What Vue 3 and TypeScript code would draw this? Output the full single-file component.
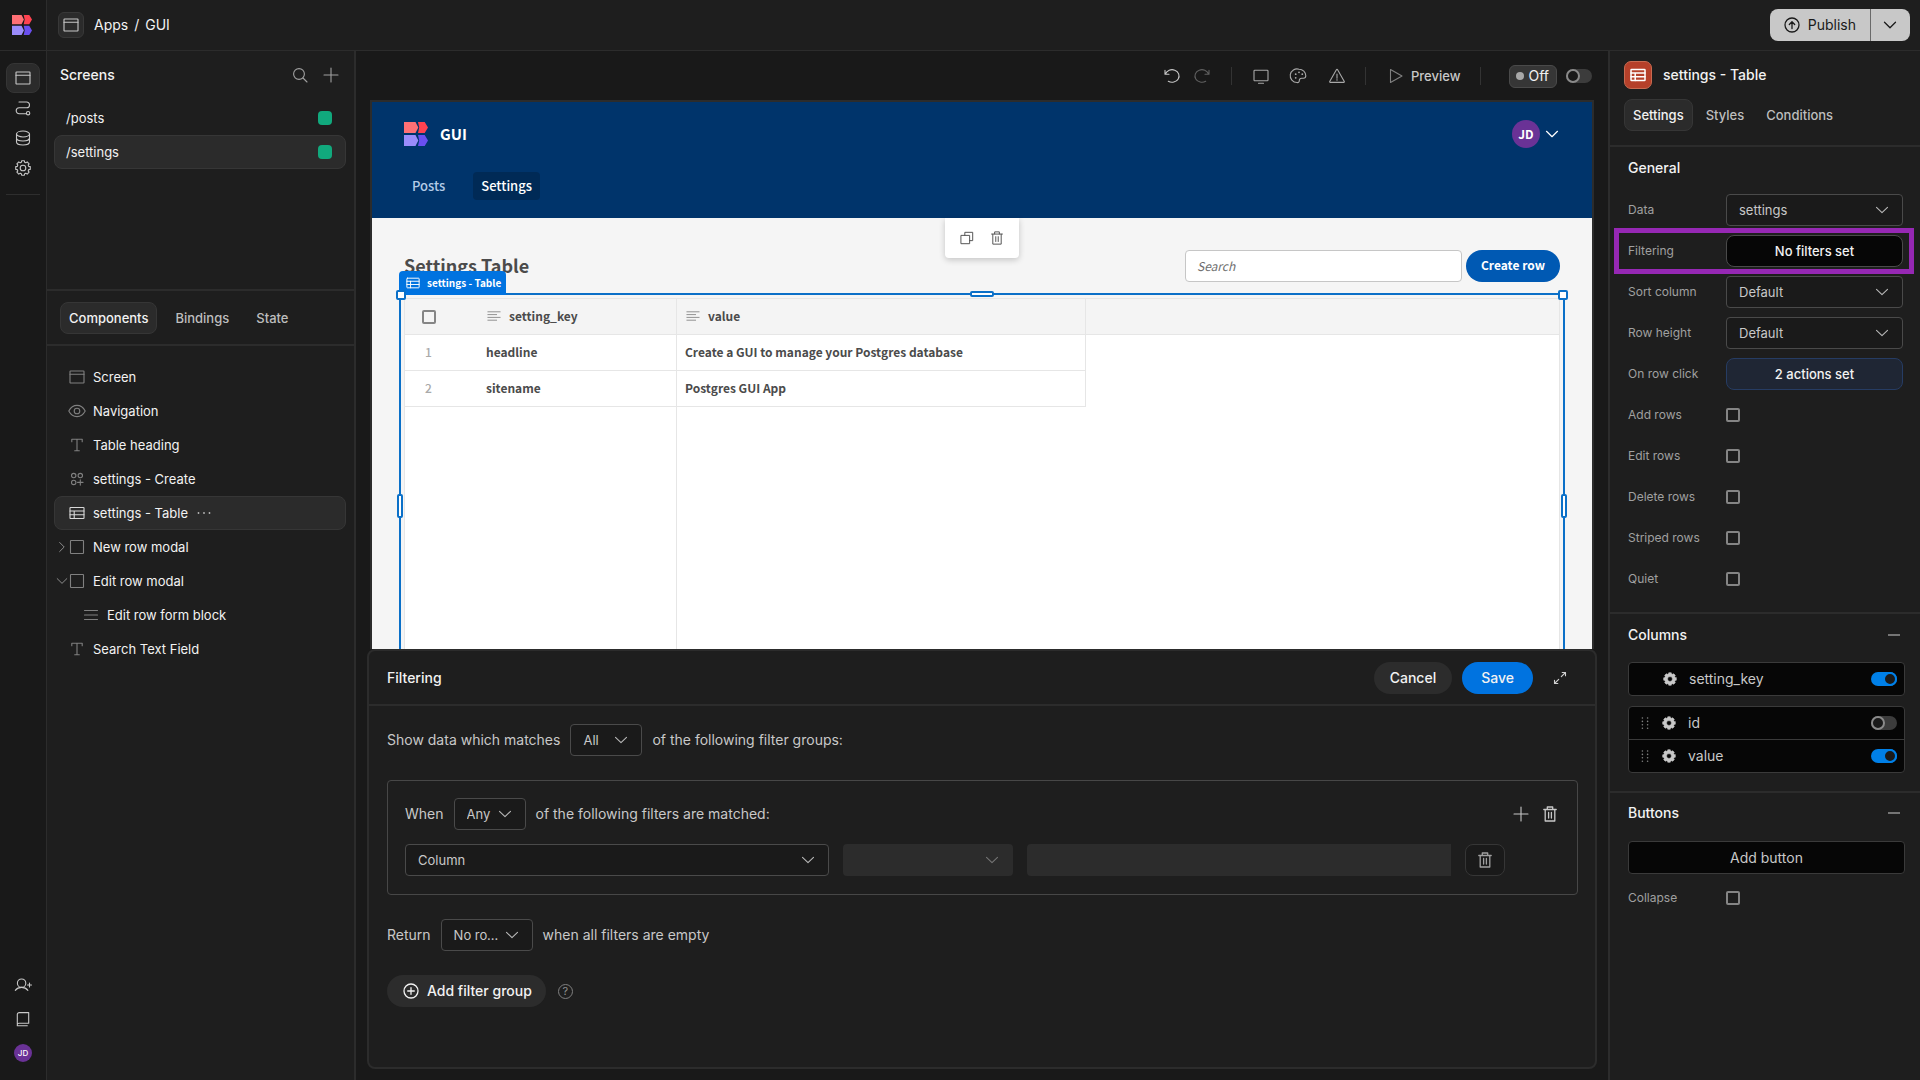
<script setup lang="ts">
import { h, ref } from 'vue'

function gear(outer: number, inner: number, teeth: number): string {
  const step = (Math.PI * 2) / teeth
  const points: string[] = []
  for (let i = 0; i < teeth; i++) {
    const a = i * step
    const corners: [number, number][] = [
      [outer, -0.24], [outer, 0.24], [inner, 0.36], [inner, 0.64],
    ]
    for (const [r, k] of corners) {
      points.push(`${(8 + r * Math.cos(a + k * step)).toFixed(2)} ${(8 + r * Math.sin(a + k * step)).toFixed(2)}`)
    }
  }
  return `M${points.join('L')}Z`
}

const icons: Record<string, string> = {
  window: '<rect x="1" y="2" width="14" height="12" rx=".6"/><path d="M1 5.2h14"/>',
  path: '<path d="M4 2h7.6a2.9 2.9 0 0 1 0 5.8H4.2a3 3 0 0 0 0 6h7"/><circle cx="13.1" cy="13.2" r="1.7"/>',
  database: '<ellipse cx="8" cy="4" rx="6.5" ry="3"/><path d="M1.500 4v8c0 1.700 2.900 3 6.500 3s6.500-1.300 6.500-3V4M1.500 8c0 1.700 2.900 3 6.500 3s6.500-1.300 6.500-3"/>',
  gear: `<path d="${gear(7.4, 5.9, 8)}"/><circle cx="8" cy="8" r="2.8"/>`,
  gearFill: `<path fill="currentColor" fill-rule="evenodd" stroke="currentColor" stroke-width=".6" d="${gear(7.4, 6.2, 8)}M8 5.200a2.800 2.800 0 1 0 0 5.600a2.800 2.800 0 1 0 0-5.600Z"/>`,
  search: '<circle cx="7" cy="7" r="5.4"/><path d="M11 11l4 4"/>',
  plus: '<path d="M8 1v14M1 8h14"/>',
  eye: '<path d="M-.2 8C1.800 4.200 4.700 2.400 8 2.400s6.200 1.800 8.200 5.600c-2 3.800-4.900 5.600-8.200 5.600S1.800 11.800-.2 8Z"/><circle cx="8" cy="8" r="2.800"/>',
  text: '<path d="M2.800 4.800V2.200h10.400v2.600M8 2.200v11.500M5.700 13.700h4.600"/>',
  shapes: '<circle cx="4.700" cy="4.600" r="2.200"/><circle cx="11.300" cy="4.600" r="2.200"/><circle cx="4.700" cy="11.400" r="2.200"/><path d="M11.300 8.700v5.400M8.600 11.400H14"/>',
  table: '<rect x="1" y="2.500" width="14" height="11" rx=".6"/><path d="M1 6h14M1 9.700h14M5.200 6v7.500"/>',
  square: '<rect x="1.500" y="1.500" width="13" height="13" rx=".6"/>',
  lines: '<path d="M1.500 3.500h13M1.500 8h13M1.500 12.500h13"/>',
  align: '<path d="M1 3.200h14M1 6.400h10M1 9.600h14M1 12.800h10"/>',
  chevron: '<path d="M2.500 5.300L8 10.700l5.500-5.400"/>',
  chevronRight: '<path d="M5.300 2.800L10.500 8l-5.200 5.200"/>',
  dots: '<g fill="currentColor" stroke="none"><circle cx="2.500" cy="8" r=".9"/><circle cx="8" cy="8" r=".9"/><circle cx="13.500" cy="8" r=".9"/></g>',
  grip: '<g fill="currentColor" stroke="none"><circle cx="5.400" cy="3" r=".8"/><circle cx="10.600" cy="3" r=".8"/><circle cx="5.400" cy="6.400" r=".8"/><circle cx="10.600" cy="6.400" r=".8"/><circle cx="5.400" cy="9.800" r=".8"/><circle cx="10.600" cy="9.800" r=".8"/><circle cx="5.400" cy="13.200" r=".8"/><circle cx="10.600" cy="13.200" r=".8"/></g>',
  userPlus: '<circle cx="6.600" cy="6.200" r="4.200"/><path d="M.3 13.400c1.500-2 3.700-3 6.300-3s4.800 1 6.300 3M14.500 6v4M12.500 8h4"/>',
  book: '<path d="M2.300 13V3.600A2 2 0 0 1 4.300 1.600h9.400v10.600H3.900a1.600 1.600 0 0 0-1.600 1.600V14.800h10"/>',
  undo: '<path d="M1 2.200v4h4M1.400 6A7 6.300 0 1 1 4.300 13.300"/>',
  redo: '<path d="M15 2.200v4h-4M14.600 6A7 6.300 0 1 0 11.700 13.300"/>',
  monitor: '<rect x="1" y="2.200" width="14" height="10.600" rx=".8"/><path d="M5.500 15.200h5"/>',
  palette: '<path d="M8 1.200a6.800 6.800 0 1 0-2 13.300c1.500.4 2.300-.7 2.300-2 0-1.600 1.100-2.300 2.400-2.300h1.800c1.300 0 2.300-.9 2.300-2.400C14.800 4 11.800 1.200 8 1.200Z"/><g fill="currentColor" stroke="none"><circle cx="8" cy="4.300" r=".9"/><circle cx="4.700" cy="6.200" r=".9"/><circle cx="4.700" cy="9.800" r=".9"/><circle cx="11.300" cy="6.200" r=".9"/></g>',
  warning: '<path d="M7.400 1.700a.7.7 0 0 1 1.200 0L15.300 13.500a.6.6 0 0 1-.5.900H1.200a.6.6 0 0 1-.5-.9Z"/><path d="M8 6v4.200M8 11.500v.8"/>',
  play: '<path d="M2.500 1.500v13L14 8Z"/>',
  publish: '<circle cx="8" cy="8" r="7"/><path d="M8 11.500V5M5.300 7.500L8 4.800l2.700 2.700"/>',
  addCircle: '<circle cx="8" cy="8" r="7"/><path d="M8 4.700v6.600M4.700 8h6.600"/>',
  expand: '<path d="M10.200 2.500h3.300v3.300M13.500 2.500L9.300 6.700M5.800 13.500H2.500v-3.300M2.500 13.500l4.200-4.200"/>',
  copy: '<path d="M5.500 5V1.500h9V11H11"/><rect x="1.500" y="5" width="9.500" height="9.500"/>',
  trash: '<path d="M1.800 3.500h12.400M5.300 3.300V1h5.400v2.300M3.200 3.700V15h9.600V3.700M6.600 6.500v5.500M9.400 6.500v5.500"/>',
}

const Icon = (props: { name: string; size?: number; weight?: number }) =>
  h('svg', {
    class: 'icon',
    viewBox: '0 0 16 16',
    width: props.size ?? 16,
    height: props.size ?? 16,
    fill: 'none',
    stroke: 'currentColor',
    'stroke-width': props.weight ?? 1.1,
    'stroke-linecap': 'round',
    'stroke-linejoin': 'round',
    'aria-hidden': 'true',
    innerHTML: icons[props.name],
  })
Icon.props = ['name', 'size', 'weight']

const Logo = (props: { size: number }) =>
  h('svg', {
    class: 'icon',
    viewBox: '0 0 24 24',
    width: props.size,
    height: props.size,
    role: 'img',
    'aria-label': 'Logo',
    innerHTML:
      '<path fill="#ff7075" d="M0 0h11.500l2.800 5.500-2.800 5.500H0Z"/><path fill="#ff4250" d="M14 0h6.700L24 5.500 20.700 11H14l1.200-5.500Z"/>' +
      '<path fill="#9b8cfb" d="M0 13h11.500l2.800 5.500-2.800 5.500H0Z"/><path fill="#6a4ff0" d="M14 13h6.700l3.300 5.500-3.300 5.500H14l1.200-5.500Z"/>',
  })
Logo.props = ['size']

interface TreeNode { label: string; icon: string; arrow?: string; child?: boolean; active?: boolean }
const tree: TreeNode[] = [
  { label: 'Screen', icon: 'window' },
  { label: 'Navigation', icon: 'eye' },
  { label: 'Table heading', icon: 'text' },
  { label: 'settings - Create', icon: 'shapes' },
  { label: 'settings - Table', icon: 'table', active: true },
  { label: 'New row modal', icon: 'square', arrow: 'chevronRight' },
  { label: 'Edit row modal', icon: 'square', arrow: 'chevron' },
  { label: 'Edit row form block', icon: 'lines', child: true },
  { label: 'Search Text Field', icon: 'text' },
]
const screens = ['/posts', '/settings']
const activeScreen = ref('/settings')
const rows = [
  { key: 'headline', value: 'Create a GUI to manage your Postgres database' },
  { key: 'sitename', value: 'Postgres GUI App' },
]
const flags = ['Add rows', 'Edit rows', 'Delete rows', 'Striped rows', 'Quiet']
const columns = ref([
  { name: 'id', on: false },
  { name: 'value', on: true },
])
</script>

<template>
  <div class="app">
    <header class="topbar">
      <a href="#" class="home" aria-label="Home"><Logo :size="20" /></a>
      <nav class="crumbs">
        <span class="app-icon"><Icon name="window" /></span>
        <a href="#">Apps</a><span>/</span><a href="#">GUI</a>
      </nav>
      <div class="publish">
        <button type="button" class="publish-main"><Icon name="publish" :weight="1.3" />Publish</button>
        <button type="button" class="publish-more" aria-label="Publish options"><Icon name="chevron" :weight="1.3" /></button>
      </div>
    </header>

    <nav class="rail">
      <a href="#" class="on" aria-label="Design"><Icon name="window" /></a>
      <a href="#" aria-label="Automation"><Icon name="path" /></a>
      <a href="#" aria-label="Data"><Icon name="database" /></a>
      <a href="#" aria-label="Settings"><Icon name="gear" /></a>
      <hr />
      <div class="rail-foot">
        <a href="#" aria-label="Invite"><Icon name="userPlus" /></a>
        <a href="#" aria-label="Docs"><Icon name="book" /></a>
        <a href="#"><span class="avatar small">JD</span></a>
      </div>
    </nav>

    <aside class="left">
      <section class="screens">
        <div class="screens-head">
          <h2>Screens</h2>
          <button type="button" class="bare" aria-label="Search screens"><Icon name="search" /></button>
          <button type="button" class="bare" aria-label="Add screen"><Icon name="plus" /></button>
        </div>
        <button
          v-for="s in screens" :key="s" type="button" class="row screen"
          :class="{ active: s === activeScreen }" @click="activeScreen = s"
        >
          {{ s }}<i class="role" />
        </button>
      </section>
      <div class="tabs left-tabs">
        <button type="button" class="tab on">Components</button>
        <button type="button" class="tab">Bindings</button>
        <button type="button" class="tab">State</button>
      </div>
      <section class="tree">
        <button
          v-for="n in tree" :key="n.label" type="button" class="row node"
          :class="{ active: n.active, child: n.child }"
        >
          <span class="arrow"><Icon v-if="n.arrow" :name="n.arrow" :size="14" /></span>
          <Icon :name="n.icon" class="node-icon" />
          <span>{{ n.label }}</span>
          <Icon v-if="n.active" name="dots" class="more" />
        </button>
      </section>
    </aside>

    <main class="center">
      <div class="toolbar">
        <div class="group history">
          <button type="button" class="bare" aria-label="Undo"><Icon name="undo" /></button>
          <button type="button" class="bare dim" aria-label="Redo"><Icon name="redo" /></button>
        </div>
        <div class="group devices">
          <button type="button" class="bare" aria-label="Device"><Icon name="monitor" /></button>
          <button type="button" class="bare" aria-label="Theme"><Icon name="palette" /></button>
          <button type="button" class="bare" aria-label="Errors"><Icon name="warning" /></button>
        </div>
        <div class="group play">
          <button type="button" class="bare preview-btn"><Icon name="play" />Preview</button>
        </div>
        <label class="dev-toggle">
          <span class="off"><i />Off</span>
          <input type="checkbox" class="switch" />
        </label>
      </div>

      <div class="preview">
        <div class="site-nav">
          <div class="site-top">
            <Logo :size="24" /><span class="site-name">GUI</span>
            <button type="button" class="user" aria-label="User menu"><span class="avatar">JD</span><Icon name="chevron" :weight="1.2" /></button>
          </div>
          <div class="site-links"><a href="#">Posts</a><a href="#" class="on">Settings</a></div>
        </div>
        <div class="float-tools">
          <button type="button" class="bare" aria-label="Duplicate"><Icon name="copy" :size="14" /></button>
          <button type="button" class="bare" aria-label="Delete"><Icon name="trash" :size="14" /></button>
        </div>
        <div class="site-body">
          <div class="site-head">
            <h1>Settings Table</h1>
            <input type="text" class="site-search" placeholder="Search" aria-label="Search" />
            <button type="button" class="create">Create row</button>
          </div>
          <div class="grid-block">
            <table>
              <colgroup><col class="c-num" /><col class="c-key" /><col class="c-val" /><col /></colgroup>
              <thead>
                <tr>
                  <th class="num"><input type="checkbox" class="box" aria-label="Select all" /></th>
                  <th class="line"><span class="th"><Icon name="align" />setting_key</span></th>
                  <th class="line"><span class="th"><Icon name="align" />value</span></th>
                  <th />
                </tr>
              </thead>
              <tbody>
                <tr v-for="(r, i) in rows" :key="r.key">
                  <td class="num">{{ i + 1 }}</td>
                  <td class="line">{{ r.key }}</td>
                  <td class="line">{{ r.value }}</td>
                  <td class="blank" />
                </tr>
                <tr class="filler"><td colspan="2" class="line" /><td class="blank" /><td class="blank" /></tr>
              </tbody>
            </table>
            <div class="selection">
              <span class="tag"><Icon name="table" :size="14" />settings - Table</span>
              <i class="handle tl" /><i class="handle tr" /><i class="handle top" />
              <i class="handle lm" /><i class="handle rm" />
            </div>
          </div>
        </div>
      </div>

      <section class="drawer">
        <div class="drawer-head">
          <h2>Filtering</h2>
          <button type="button" class="pill">Cancel</button>
          <button type="button" class="pill primary">Save</button>
          <button type="button" class="bare expand" aria-label="Expand"><Icon name="expand" /></button>
        </div>
        <div class="drawer-body">
          <div class="sentence">
            <label for="match">Show data which matches</label>
            <span class="select w-short"><select id="match"><option>All</option></select><Icon name="chevron" /></span>
            <span>of the following filter groups:</span>
          </div>
          <div class="filter-group">
            <div class="sentence">
              <label for="when">When</label>
              <span class="select w-short"><select id="when"><option>Any</option></select><Icon name="chevron" /></span>
              <span>of the following filters are matched:</span>
              <span class="group-actions">
                <button type="button" class="bare" aria-label="Add filter"><Icon name="plus" /></button>
                <button type="button" class="bare" aria-label="Delete group"><Icon name="trash" :weight="1.3" /></button>
              </span>
            </div>
            <div class="condition">
              <span class="select"><select aria-label="Column"><option>Column</option></select><Icon name="chevron" /></span>
              <span class="select off-field"><select aria-label="Operator" disabled><option></option></select><Icon name="chevron" /></span>
              <input type="text" class="value-field" aria-label="Value" disabled />
              <button type="button" class="remove" aria-label="Delete filter"><Icon name="trash" :weight="1.3" /></button>
            </div>
          </div>
          <div class="sentence">
            <label for="empty">Return</label>
            <span class="select w-mid"><select id="empty"><option>No rows</option></select><Icon name="chevron" /></span>
            <span>when all filters are empty</span>
          </div>
          <div class="add-group">
            <button type="button" class="pill"><Icon name="addCircle" :weight="1.3" />Add filter group</button>
            <button type="button" class="help" aria-label="Help">?</button>
          </div>
        </div>
      </section>
    </main>

    <aside class="right">
      <div class="right-head">
        <div class="comp"><span class="comp-icon"><Icon name="table" :weight="1.5" /></span><h2>settings - Table</h2></div>
        <div class="tabs">
          <button type="button" class="tab on">Settings</button>
          <button type="button" class="tab">Styles</button>
          <button type="button" class="tab">Conditions</button>
        </div>
      </div>
      <section class="general">
        <h3>General</h3>
        <div class="props">
          <div class="prop"><label for="p-data">Data</label><span class="select"><select id="p-data"><option>settings</option></select><Icon name="chevron" /></span></div>
          <div class="prop marked"><label for="p-filter">Filtering</label><button id="p-filter" type="button" class="set">No filters set</button></div>
          <div class="prop"><label for="p-sort">Sort column</label><span class="select"><select id="p-sort"><option>Default</option></select><Icon name="chevron" /></span></div>
          <div class="prop"><label for="p-height">Row height</label><span class="select"><select id="p-height"><option>Default</option></select><Icon name="chevron" /></span></div>
          <div class="prop"><label for="p-click">On row click</label><button id="p-click" type="button" class="set blue">2 actions set</button></div>
          <div v-for="f in flags" :key="f" class="prop"><label :for="f">{{ f }}</label><input :id="f" type="checkbox" class="box" /></div>
        </div>
      </section>
      <section class="cols">
        <div class="sec-head"><h3>Columns</h3><i class="minus" /></div>
        <div class="list">
          <label class="item"><i class="pad" /><Icon name="gearFill" :size="14" class="item-gear" />setting_key<input type="checkbox" class="switch" checked /></label>
        </div>
        <div class="list">
          <label v-for="c in columns" :key="c.name" class="item">
            <Icon name="grip" class="grip" /><Icon name="gearFill" :size="14" class="item-gear" />{{ c.name }}<input v-model="c.on" type="checkbox" class="switch" />
          </label>
        </div>
      </section>
      <section class="btns">
        <div class="sec-head"><h3>Buttons</h3><i class="minus" /></div>
        <button type="button" class="add-button">Add button</button>
        <div class="prop"><label for="collapse">Collapse</label><input id="collapse" type="checkbox" class="box" /></div>
      </section>
    </aside>
  </div>
</template>

<style>
body {
  margin: 0;
  background: #191919;
}
</style>

<style scoped>
.app {
  display: grid;
  grid-template: 51px minmax(0, 1fr) / 46px 310px minmax(0, 1fr) 312px;
  grid-template-areas: 'top top top top' 'rail left center right';
  height: 100vh;
  overflow: hidden;
  background: #191919;
  color: #f2f2f2;
  font: 14px/20px Inter, sans-serif;
}
.app *, .app *::before { box-sizing: border-box; }
h1, h2, h3 { margin: 0; font: inherit; font-weight: 500; }
button, input, select { font: inherit; color: inherit; margin: 0; }
button { cursor: pointer; }
a { color: inherit; text-decoration: none; }
.icon { flex: none; display: block; overflow: visible; }
.bare { display: flex; padding: 0; border: 0; background: none; }

/* top bar */
.topbar { grid-area: top; display: flex; align-items: stretch; background: #1e1e1e; border-bottom: 1px solid #2c2c2c; }
.home { width: 47px; border-right: 1px solid #2c2c2c; display: flex; align-items: center; padding-left: 12px; background: #191919; }
.crumbs { display: flex; align-items: center; gap: 6px; flex: 1; padding-left: 11px; }
.app-icon { width: 26px; height: 26px; border: 1px solid #383838; border-radius: 6px; background: #2b2b2b; display: grid; place-items: center; margin-right: 4px; color: #c8c8c8; }
.publish { display: flex; margin: 9px 10px 9px 0; border-radius: 8px; overflow: hidden; color: #1a1a1a; }
.publish button { display: flex; align-items: center; border: 0; background: #c8c8c8; }
.publish-main { gap: 8px; padding: 0 14px; }
.publish .publish-more { padding: 0 12px 0 11px; border-left: 1px solid #6a6a6a; }

/* rail */
.rail { grid-area: rail; padding: 12px 6px; display: flex; flex-direction: column; align-items: center; color: #c8c8c8; }
.rail a { width: 34px; height: 30px; display: grid; place-items: center; }
.rail a.on { background: #2b2b2b; border: 1px solid #353535; border-radius: 8px; }
.rail hr { width: 34px; border: 0; border-top: 1px solid #2e2e2e; margin: 11px 0 0; }
.rail-foot { margin-top: auto; display: flex; flex-direction: column; gap: 4px; }
.avatar { width: 28px; height: 28px; border-radius: 50%; background: #6a3296; color: #fff; display: grid; place-items: center; font: bold 12px/20px 'Noto Sans CJK SC', sans-serif; }
.avatar.small { width: 18px; height: 18px; font: 500 8px/18px Inter, sans-serif; }

/* left panel */
.left { grid-area: left; background: #1e1e1e; border-left: 1px solid #2c2c2c; border-right: 2px solid #2c2c2c; }
.screens { height: 240px; padding: 8px 8px 0 7px; border-bottom: 2px solid #2c2c2c; }
.screens-head { display: flex; align-items: center; gap: 15px; height: 32px; margin-bottom: 10px; padding: 0 7px 0 6px; }
.screens-head h2 { flex: 1; }
.screens-head .bare { color: #a0a0a0; }
.row { display: flex; align-items: center; width: 100%; height: 34px; border: 1px solid transparent; border-radius: 8px; background: none; padding: 0; font-size: 13px; text-align: left; white-space: nowrap; }
.row.active { background: #2b2b2b; border-color: #363636; }
.screen { justify-content: space-between; padding: 0 13px 0 11px; }
.role { width: 14px; height: 14px; border-radius: 4px; background: #11a97d; }
.tabs { display: flex; gap: 4px; }
.tab { height: 32px; padding: 0 8px; border: 1px solid transparent; border-radius: 8px; background: none; font-size: 13px; font-weight: 500; color: #bdbdbd; }
.tab.on { background: #2b2b2b; border-color: #363636; color: #f2f2f2; }
.left-tabs { gap: 9px; padding: 11px 13px 10px; border-bottom: 2px solid #2c2c2c; }
.tree { padding: 14px 8px 14px 7px; }
.arrow { width: 14px; flex: none; color: #909090; }
.node.child { padding-left: 14px; }
.node-icon { color: #808080; margin-right: 8px; }
.active .node-icon { color: #d8d8d8; }
.more { margin-left: 8px; color: #b8b8b8; }

/* centre */
.center { grid-area: center; padding: 0 11px 11px; display: flex; flex-direction: column; }
.toolbar { display: flex; align-items: center; justify-content: flex-end; height: 49px; padding: 1px 5px 0 0; color: #a8a8a8; }
.group { display: flex; align-items: center; height: 18px; border-right: 1px solid #333; }
.history { gap: 14px; padding-right: 21px; color: #c8c8c8; }
.dim { color: #606060; }
.devices { gap: 22px; padding: 0 20px 0 21px; }
.play { padding: 0 20px 0 22px; }
.preview-btn { align-items: center; gap: 7px; font-size: 13px; font-weight: 500; line-height: 16px; color: #c8c8c8; }
.preview-btn .icon { color: #808080; }
.dev-toggle { display: flex; align-items: center; gap: 9px; padding-left: 28px; color: #f2f2f2; }
.off { display: flex; align-items: center; gap: 4px; height: 23px; padding: 0 7px 0 6px; border: 1px solid #4a4a4a; border-radius: 6px; background: #363636; }
.off i { width: 8px; height: 8px; border-radius: 50%; background: #a8a8a8; }
.switch { appearance: none; width: 26px; height: 14px; border-radius: 7px; background: #3c3c3c; display: flex; flex: none; }
.switch::before { content: ''; width: 14px; height: 14px; border: 2px solid #8a8a8a; border-radius: 50%; background: #1a1a1a; }
.switch:checked { background: #0080e8; justify-content: flex-end; }
.switch:checked::before { border-color: #0080e8; }

/* previewed app */
.preview { flex: 1; min-height: 0; margin: 0 3px; border: 2px solid #2c2c2c; border-bottom: 0; overflow: hidden; position: relative; background: #f5f5f5; color: #4b4b4b; font: 13px/20px 'Noto Sans CJK SC', sans-serif; }
.site-nav { height: 116px; background: #00346b; color: #fff; padding: 18px 32px 0; }
.site-top { display: flex; align-items: center; height: 28px; }
.site-name { flex: 1; padding-left: 12px; font-size: 15px; font-weight: bold; }
.user { display: flex; align-items: center; gap: 4px; border: 0; padding: 0; background: none; }
.site-links { display: flex; gap: 20px; margin-top: 24px; font-weight: 500; }
.site-links a { height: 28px; line-height: 28px; padding: 0 8px; border-radius: 4px; color: #b3cbe6; }
.site-links a.on { background: #002a56; color: #fff; }
.float-tools { position: absolute; top: 116px; left: 573px; display: flex; gap: 16px; padding: 13px 15px; background: #fff; border-radius: 0 0 4px 4px; box-shadow: 0 2px 6px rgba(0, 0, 0, 0.2); color: #505050; }
.site-body { padding: 32px 32px 0; }
.site-head { display: flex; height: 32px; gap: 4px; margin-bottom: 16px; }
h1 { flex: 1; font-size: 18px; font-weight: bold; line-height: 30px; }
.site-search { width: 277px; padding: 0 11px; border: 1px solid #c6c6c6; border-radius: 4px; background: #fff; }
.site-search::placeholder { color: #6e6e6e; font-size: 12px; font-style: italic; opacity: 1; }
.create { border: 0; border-radius: 16px; padding: 0 15px 3px; background: #0059b3; color: #fff; font-size: 12px; font-weight: bold; }
.grid-block { position: relative; height: 414px; font-size: 12px; }
table { width: 100%; height: 100%; table-layout: fixed; border-collapse: separate; border-spacing: 0; background: #fff; border: 1px solid #e6e6e6; }
.c-num { width: 73px; }
.c-key { width: 199px; }
.c-val { width: 409px; }
tr { height: 36px; }
th, td { padding: 0 8px 1px; text-align: left; border-bottom: 1px solid #e6e6e6; white-space: nowrap; font-size: 12px; font-weight: bold; }
th { background: #f4f4f4; }
.th { display: flex; align-items: center; gap: 8px; padding-left: 1px; }
.th .icon { color: #8e8e8e; width: 14px; }
.line { border-right: 1px solid #e6e6e6; }
td.num { color: #aaa; padding: 0 0 1px 20px; font-weight: 500; }
th.num { padding: 0 0 0 17px; }
.filler { height: auto; }
td.blank, .filler td { border-bottom: 0; }
.box { appearance: none; display: block; width: 14px; height: 14px; border: 2px solid #858585; border-radius: 2px; background: transparent; }
.selection { position: absolute; inset: -5px; border: 2px solid #0b70c8; height: 426px; pointer-events: none; }
.tag { position: absolute; left: -2px; bottom: 100%; height: 24px; display: flex; align-items: center; gap: 7px; padding: 0 5px 0 7px; border-radius: 4px 4px 0 0; background: #0073e0; color: #fff; font-size: 10px; font-weight: bold; white-space: nowrap; }
.handle { position: absolute; background: #fff; border: 2px solid #0b70c8; border-radius: 2px; width: 10px; height: 10px; }
.tl { left: -5px; top: -5px; }
.tr { right: -5px; top: -5px; }
.top { left: 50%; top: -4px; width: 24px; height: 6px; margin-left: -12px; }
.lm, .rm { top: 50%; width: 6px; height: 24px; margin-top: -12px; }
.lm { left: -4px; }
.rm { right: -4px; }

/* drawer */
.drawer { flex: none; height: 420px; border: 2px solid #2c2c2c; border-radius: 8px; background: #1e1e1e; }
.drawer-head { display: flex; align-items: center; height: 55px; padding: 0 27px 0 18px; border-bottom: 2px solid #2c2c2c; }
.drawer-head h2 { flex: 1; }
.pill { display: flex; align-items: center; gap: 8px; height: 32px; padding: 0 16px; border: 0; border-radius: 16px; background: #2c2c2c; font-weight: 500; }
.drawer-head .primary { background: #0073e0; padding: 0 19px; margin-left: 10px; }
.expand { margin-left: 19px; color: #d0d0d0; }
.drawer-body { padding: 18px 17px 18px 18px; display: flex; flex-direction: column; gap: 24px; color: #c8c8c8; }
.sentence { display: flex; align-items: center; gap: 10px; height: 32px; }
.select { position: relative; display: block; }
.select .icon { position: absolute; right: 13px; top: 8px; color: #b8b8b8; pointer-events: none; }
.select select { appearance: none; display: block; width: 100%; height: 32px; padding: 0 38px 0 12px; border: 1px solid #4a4a4a; border-radius: 4px; background: #1a1a1a; color: #c8c8c8; font-size: 13px; text-overflow: ellipsis; }
.w-short { width: 72px; }
.w-short select { padding-right: 30px; }
.w-mid { width: 92px; }
.w-mid select { padding-right: 30px; }
.filter-group { border: 1px solid #474747; border-radius: 4px; padding: 17px 17px 18px; display: flex; flex-direction: column; gap: 14px; }
.group-actions { display: flex; gap: 13px; margin-left: auto; padding-right: 2px; }
.condition { display: grid; grid-template-columns: 1fr 170px 1fr 40px; gap: 14px; padding-right: 55px; }
.off-field select { border: 0; background: #2c2c2c; opacity: 1; }
.off-field .icon { color: #757575; }
.value-field { border: 0; border-radius: 4px 0 0 4px; background: #2c2c2c; min-width: 0; }
.remove { display: grid; place-items: center; border: 1px solid #363636; border-radius: 8px; background: #1a1a1a; padding: 0; color: #a0a0a0; }
.add-group { display: flex; align-items: center; gap: 12px; color: #f2f2f2; }
.add-group .pill { padding: 0 14px 0 16px; }
.help { width: 15px; height: 15px; padding: 0; border: 1px solid #808080; border-radius: 50%; background: none; color: #909090; font-size: 11px; line-height: 12px; }

/* right panel */
.right { grid-area: right; background: #1e1e1e; border-left: 2px solid #2c2c2c; }
.right-head { padding: 10px 14px 14px; border-bottom: 2px solid #2c2c2c; display: flex; flex-direction: column; gap: 10px; }
.comp { display: flex; align-items: center; gap: 11px; }
.comp-icon { width: 28px; height: 28px; border: 1px solid #c86a50; border-radius: 7px; background: #b5402a; display: grid; place-items: center; color: #fff; }
.general { padding: 11px 17px 16px 18px; height: 467px; border-bottom: 2px solid #2c2c2c; }
.props { display: grid; gap: 9px; margin-top: 16px; }
.prop { position: relative; display: grid; grid-template-columns: 98px 1fr; align-items: center; min-height: 32px; }
.prop label { font-size: 12px; color: #a0a0a0; }
.marked::after { content: ''; position: absolute; inset: -7px -11px -7px -14px; border: 5px solid #9628b4; pointer-events: none; }
.set { height: 32px; border: 1px solid #4a4a4a; border-radius: 8px; background: #060606; font-size: 13px; font-weight: 500; padding: 0; }
.set.blue { background: #1f2634; border-color: #263c63; }
.sec-head { display: flex; align-items: center; justify-content: space-between; padding-right: 5px; height: 20px; }
.minus { width: 12px; height: 2px; background: #757575; }
.cols { height: 179px; padding: 11px 15px 0 18px; border-bottom: 2px solid #2c2c2c; }
.list { border: 1px solid #3a3a3a; border-radius: 4px; background: #060606; margin-top: 10px; }
.sec-head + .list { margin-top: 17px; }
.item { display: flex; align-items: center; height: 32px; padding: 0 7px 0 8px; color: #c8c8c8; }
.item + .item { border-top: 1px solid #3a3a3a; height: 33px; }
.item .switch { margin-left: auto; }
.item-gear { margin-right: 12px; }
.grip { margin-right: 9px; color: #808080; }
.pad { width: 26px; }
.btns { padding: 10px 15px 0 18px; }
.add-button { width: 100%; height: 33px; margin: 18px 0 8px; border: 1px solid #3a3a3a; border-radius: 4px; background: #060606; color: #c8c8c8; }
</style>
